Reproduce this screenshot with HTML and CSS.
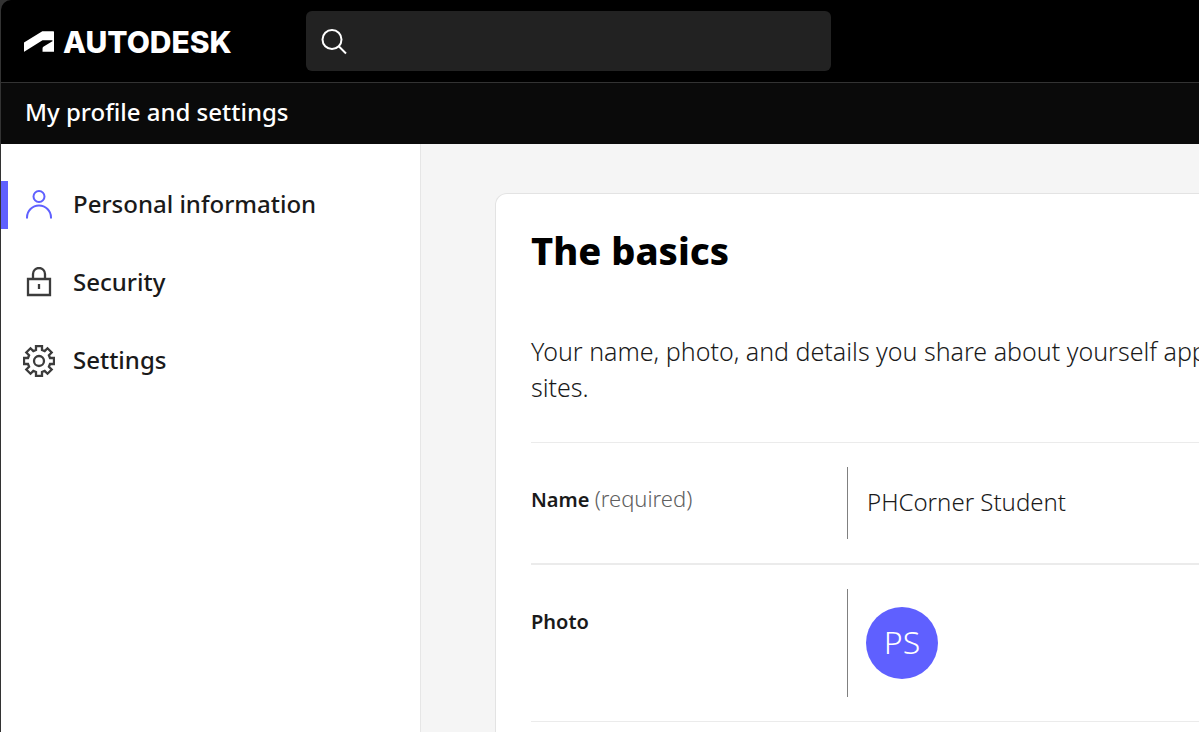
FILE: index.html
```html
<!DOCTYPE html>
<html lang="en">
<head>
    <meta charset="UTF-8">
    <meta name="viewport" content="width=device-width, initial-scale=1.0">
    <title>My profile and settings</title>
    <link rel="stylesheet" href="styles.css">
</head>
<body>
    <header class="topbar">
        <a class="logo" href="#">
            <svg class="logo-mark" viewBox="0 3.8 24 16.4" aria-hidden="true">
                <path fill="#fff" d="m.129 20.202 14.7-9.136h7.625c.235 0 .445.188.445.445 0 .21-.092.305-.21.375l-7.222 4.323c-.47.283-.633.845-.633 1.265l-.008 2.725H24V4.362a.561.561 0 0 0-.585-.562h-8.752L0 12.893V20.2h.129z"/>
            </svg>
            <span>AUTODESK</span>
        </a>
        <form class="search">
            <label for="search">
                <svg viewBox="0 0 28 28" role="img" aria-label="Search">
                    <circle cx="12" cy="12.5" r="9.5"/>
                    <path d="M19 19.5l7 7"/>
                </svg>
            </label>
            <input type="search" id="search">
        </form>
    </header>
    <div class="subbar">My profile and settings</div>

    <div class="page">
        <nav class="sidebar">
            <a class="nav-item active" href="#">
                <svg viewBox="0 0 32 32" aria-hidden="true">
                    <circle cx="16" cy="7.5" r="5.5"/>
                    <path d="M4 29.5v-1a12 12 0 0 1 24 0v1"/>
                </svg>
                <span>Personal information</span>
            </a>
            <a class="nav-item" href="#">
                <svg viewBox="0 0 32 32" aria-hidden="true">
                    <path d="M5 12h22v16H5z"/>
                    <path d="M10 12V7a6 6 0 0 1 12 0v5"/>
                    <path d="M16 17v5"/>
                </svg>
                <span>Security</span>
            </a>
            <a class="nav-item" href="#">
                <svg viewBox="0 0 32 32" aria-hidden="true">
                    <path d="M13 5V1h6v4l2.7 1.1 2.8-2.8 4.2 4.2-2.8 2.8L27 13h4v6h-4l-1.1 2.7 2.8 2.8-4.2 4.2-2.8-2.8L19 27v4h-6v-4l-2.7-1.1-2.8 2.8-4.2-4.2 2.8-2.8L5 19H1v-6h4l1.1-2.7-2.8-2.8 4.2-4.2 2.8 2.8z"/>
                    <circle cx="16" cy="16" r="5"/>
                </svg>
                <span>Settings</span>
            </a>
        </nav>

        <main class="content">
            <section class="card">
                <h1>The basics</h1>
                <p>Your name, photo, and details you share about yourself app<br>sites.</p>
                <dl>
                    <div class="row">
                        <dt>Name <span class="hint">(required)</span></dt>
                        <dd>PHCorner Student</dd>
                    </div>
                    <div class="row">
                        <dt>Photo</dt>
                        <dd class="photo"><span class="avatar">PS</span></dd>
                    </div>
                </dl>
            </section>
        </main>
    </div>
</body>
</html>
```
FILE: styles.css
```css
* {
    box-sizing: border-box;
}

body {
    margin: 0;
    min-height: 100vh;
    display: flex;
    flex-direction: column;
    border-left: 1px solid #333;
    background-color: #333;
    font-family: "Noto Sans", "Open Sans", sans-serif;
    font-size: 24px;
    color: #1a1a1a;
    overflow: hidden;
}

a {
    color: inherit;
    text-decoration: none;
}

.topbar {
    display: flex;
    align-items: center;
    gap: 72px;
    padding: 11px 24px 11px 23px;
    border-bottom: 1px solid #333;
    border-top-left-radius: 10px;
    background-color: #000;
}

.logo {
    display: flex;
    align-items: center;
    gap: 9px;
    width: 210px;
    padding-top: 1px;
    color: #fff;
    font-family: Inter, sans-serif;
    font-size: 30px;
    font-weight: 800;
    line-height: 36px;
}

.logo-mark {
    flex: none;
    width: 30px;
    height: 21px;
}

.search {
    display: flex;
    align-items: center;
    flex: 0 1 525px;
    height: 60px;
    padding: 0 14px;
    border-radius: 6px;
    background-color: #222;
}

.search svg {
    display: block;
    width: 28px;
    height: 28px;
    fill: none;
    stroke: #fff;
    stroke-width: 2;
}

.search input {
    flex: 1;
    min-width: 0;
    padding: 0 12px;
    border: none;
    outline: none;
    background: none;
    color: #fff;
    font: inherit;
}

.subbar {
    padding: 11px 24px 14px;
    background-color: #0a0a0a;
    color: #fff;
    font-weight: 500;
    line-height: 36px;
}

.page {
    flex: 1;
    display: flex;
    background-color: #f5f5f5;
}

.sidebar {
    flex: none;
    display: flex;
    flex-direction: column;
    gap: 30px;
    width: 420px;
    padding-top: 37px;
    border-right: 1px solid #e6e6e6;
    background-color: #fff;
}

.nav-item {
    display: flex;
    align-items: center;
    gap: 18px;
    height: 48px;
    padding-left: 15px;
    border-left: 7px solid transparent;
    font-weight: 500;
}

.nav-item span {
    padding-bottom: 3px;
}

.nav-item.active {
    border-left-color: #5f60ff;
}

.nav-item svg {
    width: 32px;
    height: 32px;
    fill: none;
    stroke: #3c3c3c;
    stroke-width: 2.3;
}

.nav-item.active svg {
    stroke: #5f60ff;
    stroke-width: 2;
}

.content {
    flex: 1;
    min-width: 0;
    display: flex;
    padding: 49px 0 0 74px;
    overflow: hidden;
}

/* the card runs past the right edge of the window */
.card {
    flex: 1 0 960px;
    padding: 32px 35px 0;
    border: 1px solid #e3e3e3;
    border-bottom: none;
    border-radius: 12px 12px 0 0;
    background-color: #fff;
}

h1 {
    margin: 0 0 59px;
    color: #000;
    font-size: 38px;
    font-weight: 800;
    line-height: 48px;
}

p {
    margin: 0 0 37px;
    font-size: 25px;
    font-weight: 300;
    line-height: 36px;
}

dl {
    margin: 0;
    border-top: 1px solid #ebebeb;
}

.row {
    display: grid;
    grid-template-columns: 316px 1fr;
    padding: 24px 0;
    border-bottom: 2px solid #ebebeb;
}

.row:last-child {
    border-bottom-width: 1px;
}

dt {
    padding-top: 15px;
    font-size: 20px;
    font-weight: 600;
    line-height: 36px;
}

.hint {
    color: #606060;
    font-size: 22px;
    font-weight: 300;
    line-height: 24px;
}

dd {
    margin: 0;
    padding: 17px 19px 19px;
    border-left: 1px solid #808080;
    font-weight: 300;
    line-height: 36px;
}

.photo {
    padding: 18px;
}

.avatar {
    display: flex;
    align-items: center;
    justify-content: center;
    width: 72px;
    height: 72px;
    padding-bottom: 2px;
    border-radius: 50%;
    background-color: #5f60ff;
    color: #fff;
    font-size: 32px;
}
```
